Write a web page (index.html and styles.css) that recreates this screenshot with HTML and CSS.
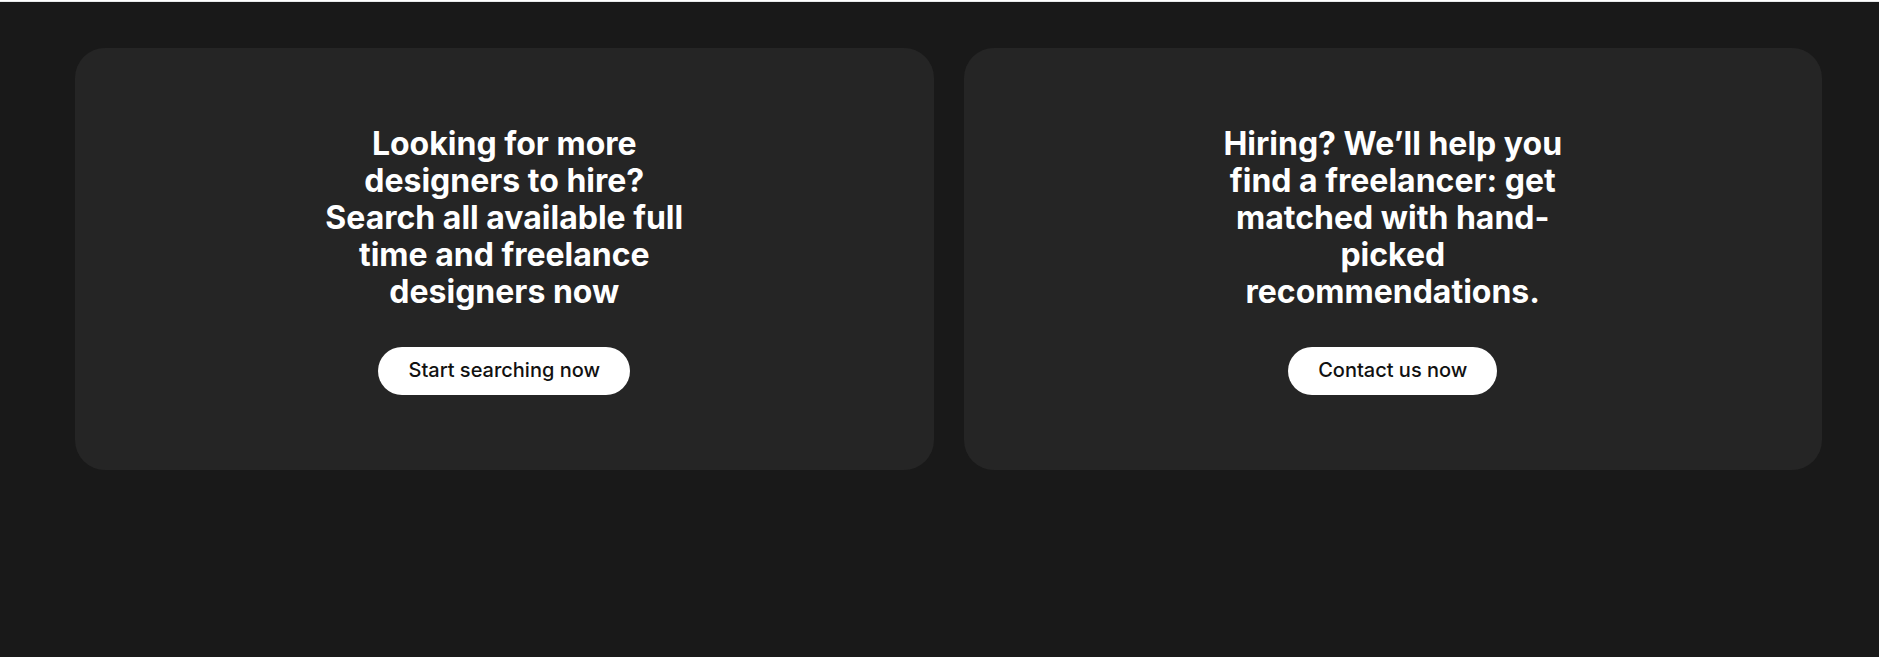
FILE: index.html
```html
<!DOCTYPE html>
<html lang="en">
<head>
<meta charset="utf-8">
<title>Hire designers</title>
<link rel="stylesheet" href="styles.css">
</head>
<body>
<main class="promo">
  <section class="card">
    <h2 class="card-title">Looking for more designers to hire? Search all available full time and freelance designers now</h2>
    <a class="button" href="#search">Start searching now</a>
  </section>
  <section class="card">
    <h2 class="card-title">Hiring? We’ll help you find a freelancer: get matched with hand-picked recommendations.</h2>
    <a class="button" href="#contact">Contact us now</a>
  </section>
</main>
</body>
</html>
```
FILE: styles.css
```css
* {
  box-sizing: border-box;
}

body {
  margin: 0;
  background: #fff;
  font-family: Inter, "Liberation Sans", sans-serif;
}

.promo {
  display: grid;
  grid-template-columns: 1fr 1fr;
  align-items: start;
  gap: 30px;
  min-height: calc(100vh - 2px);
  margin: 1px 0;
  padding: 46px 57px 46px 75px;
  border-top: 1px solid #e7e9ea;
  background: #191919;
}

.card {
  display: flex;
  flex-direction: column;
  align-items: center;
  gap: 37px;
  padding: 77px 40px 75px;
  border-radius: 30px;
  background: #252525;
}

.card-title {
  max-width: 375px;
  margin: 0;
  color: #fff;
  font-size: 32px;
  font-weight: 700;
  line-height: 37px;
  text-align: center;
}

.button {
  padding: 11px 30px 13px;
  border-radius: 24px;
  background: #fff;
  color: #111;
  font-size: 20px;
  font-weight: 500;
  line-height: 24px;
  text-decoration: none;
}
```
